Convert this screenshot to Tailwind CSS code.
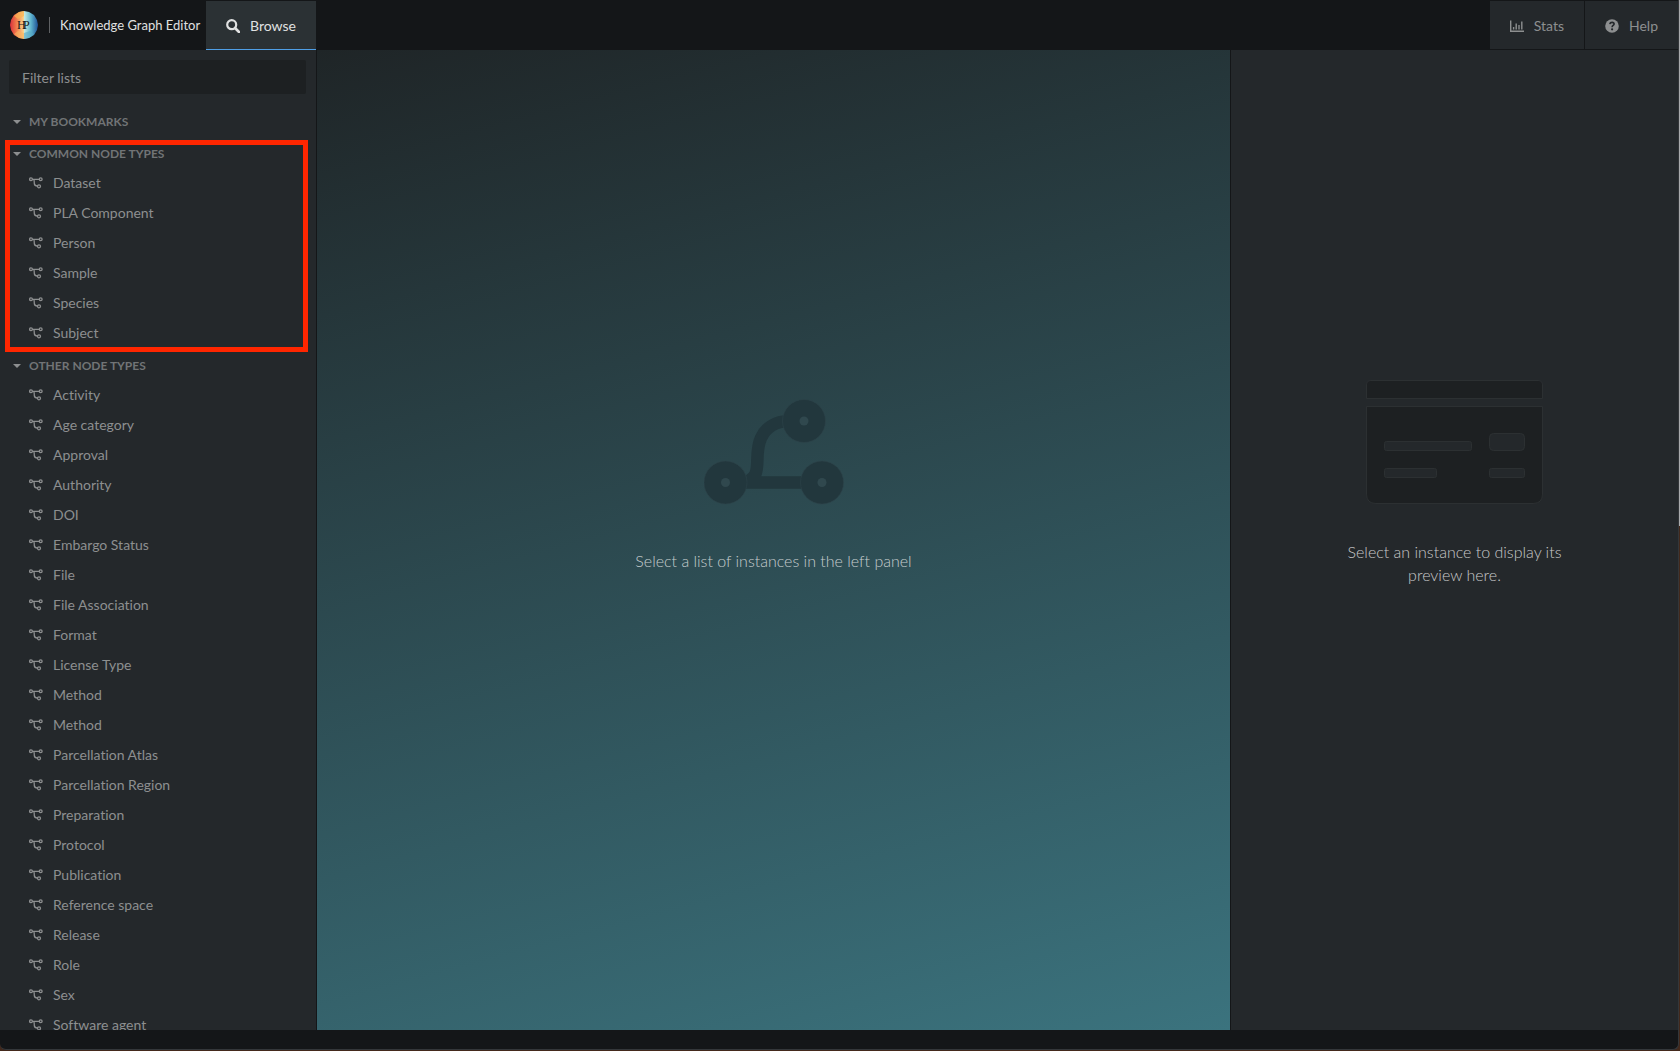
<!DOCTYPE html>
<html lang="en">
<head>
<meta charset="utf-8">
<title>Knowledge Graph Editor</title>
<script src="https://cdn.jsdelivr.net/npm/@tailwindcss/browser@4"></script>
</head>
<body class="bg-[#43291c] font-['Lato',sans-serif] text-sm text-[#8d8f90] [font-variant-ligatures:none]">
<svg class="hidden">
  <symbol id="node" viewBox="0 0 14 12">
    <g fill="none" stroke="currentColor">
      <circle cx="2" cy="2.3" r="1.4" stroke-width="1.3"/>
      <circle cx="11.7" cy="2.3" r="1.4" stroke-width="1.3"/>
      <circle cx="10" cy="9.3" r="1.5" stroke-width="1.3"/>
      <path d="M3.3 2.3H10.5M4.8 2.5C5.4 3.5 5.2 5 5.3 6.4C5.4 8.2 6.4 9 8.6 9.1" stroke-width="1.3"/>
    </g>
  </symbol>
</svg>
<div class="flex h-screen flex-col bg-linear-to-b from-[#a9abad] from-50% to-[#43291c] to-50% pr-px pb-px">
<div class="flex min-h-0 flex-1 flex-col overflow-hidden rounded-b-md border-r border-b border-[#34373a] bg-[#141618]">
  <header class="flex h-[50px] shrink-0">
    <div class="flex w-[206px] shrink-0 items-center pl-[10px]">
      <svg class="size-7" viewBox="0 0 28 28">
        <defs>
          <linearGradient id="warm" x1="0" y1="0" x2="1" y2="0"><stop offset="0" stop-color="#d9303c"/><stop offset=".45" stop-color="#f07a4a"/><stop offset="1" stop-color="#fbd58c"/></linearGradient>
          <linearGradient id="cool" x1="0" y1="0" x2="1" y2="0"><stop offset="0" stop-color="#c5ebe4"/><stop offset=".5" stop-color="#5fb4cd"/><stop offset="1" stop-color="#1c4f94"/></linearGradient>
        </defs>
        <path d="M14 0L9 1L4 4L1 9L0 14L1 19L4 24L9 27L14 28Z" fill="url(#warm)"/>
        <path d="M14 0L19 1L24 4L27 9L28 14L27 19L24 24L19 27L14 28Z" fill="url(#cool)"/>
        <path d="M4 5L9 1L14 0V5L8 8Z" fill="#fbb552" opacity=".7"/>
        <path d="M4 23L9 27L14 28V22L8 20Z" fill="#f9b460" opacity=".6"/>
        <path d="M14 22L20 20L24 23L19 27L14 28Z" fill="#55a9c6" opacity=".6"/>
        <text x="7" y="18" font-family="Liberation Serif" font-size="12" fill="#161a20">H</text>
        <text x="13" y="18" font-family="Liberation Serif" font-size="12" fill="#161a20">P</text>
      </svg>
      <span class="ml-[11px] h-4 w-px bg-[#5f6163]"></span>
      <h1 class="ml-[10px] text-[13px] whitespace-nowrap text-[#e0e1e1]">Knowledge Graph Editor</h1>
    </div>
    <button class="mt-px flex w-[110px] items-center border-b border-[#4f9fe6] bg-[#2b3134] pt-px pl-5 text-[#e0e1e1]">
      <svg class="mr-[10px] size-[14px]" viewBox="0 0 14 14" fill="none" stroke="currentColor"><circle cx="5.7" cy="5.7" r="4.5" stroke-width="2.2"/><path d="M9 9L13 13" stroke-width="2.6" stroke-linecap="round"/></svg>
      Browse
    </button>
    <nav class="ml-auto flex gap-px py-px">
      <button class="flex items-center gap-[10px] bg-[#24282b] px-5 pt-px">
        <svg class="size-[14px]" viewBox="0 0 14 14" fill="none" stroke="currentColor"><path d="M.7 1.5V12.2H14" stroke-width="1.4"/><path d="M3.6 10.5V8M6.2 10.5V4.5M9 10.5V6M11.8 10.5V2.5" stroke-width="1.4"/></svg>
        Stats
      </button>
      <button class="flex items-center gap-[10px] bg-[#24282b] px-5 pt-px">
        <svg class="size-[14px]" viewBox="0 0 14 14"><circle cx="7" cy="7" r="6.8" fill="currentColor"/><path d="M4.800 5.200C5 3.800 6 3.400 7.100 3.400C8.300 3.400 9.100 4.100 9.100 5.100C9.100 6.500 7.100 6.500 7.100 8.200" fill="none" stroke="#24282b" stroke-width="1.6"/><circle cx="7.1" cy="10.3" r="1.1" fill="#24282b"/></svg>
        Help
      </button>
    </nav>
  </header>
  <main class="flex min-h-0 flex-1">
    <aside class="flex w-[317px] shrink-0 flex-col overflow-hidden border-r border-[#141618] bg-[#24282b]">
      <div class="pt-[10px] pr-[10px] pb-[14px] pl-[9px]">
        <input type="text" aria-label="Filter lists" placeholder="Filter lists" class="h-[34px] w-full rounded-xs bg-[#1d2022] px-[13px] placeholder:text-[#8d8f90]">
      </div>
      <div id="lists" class="flex flex-col gap-1"></div>
    </aside>
    <section class="flex flex-1 flex-col items-center bg-linear-[165deg,#1f2527,#3b737e] pt-[349px]">
      <svg class="h-[106px] w-[140px]" viewBox="0 0 140 106">
        <path d="M24 83.500H118M38 83.500C62 80 48 58 57 39C61 30 70 22 86 22" fill="none" stroke="#22373d" stroke-width="12.5"/>
        <g fill="#22373d" stroke="#2d4349" stroke-width=".6"><circle cx="21.5" cy="83.500" r="21.5"/><circle cx="118" cy="83.500" r="21.5"/><circle cx="100" cy="22" r="21.500"/></g>
        <g fill="#30484e"><circle cx="21.5" cy="83.500" r="4.5"/><circle cx="118" cy="83.500" r="4.5"/><circle cx="100" cy="22" r="4.5"/></g>
      </svg>
      <p class="mt-[44px] text-base font-light text-[#c5cccd]">Select a list of instances in the left panel</p>
    </section>
    <aside class="flex w-[448px] shrink-0 flex-col items-center border-l border-[#141618] bg-[#24282b] pt-[330px]">
      <svg class="h-[124px] w-[177px]" viewBox="0 0 177 124" fill="#1d2022" stroke="#2c3032">
        <path d="M.5 18.500V5Q.5 .5 5 .5H172Q176.500 .5 176.500 5V18.500Z"/>
        <path d="M.5 26.500H176.500V114Q176.500 123.500 167 123.500H10Q.5 123.500 .5 114Z"/>
        <g fill="#24282b"><rect x="18.5" y="61.5" width="87" height="9" rx="2"/><rect x="18.5" y="88.5" width="52" height="9" rx="2"/><rect x="123.5" y="53.5" width="35" height="17" rx="4"/><rect x="123.5" y="88.5" width="35" height="9" rx="2"/></g>
      </svg>
      <p class="mt-[36px] w-[240px] text-center text-base leading-[23px] font-light text-[#c8c9ca]">Select an instance to display its preview here.</p>
    </aside>
  </main>
  <footer class="h-[19px] shrink-0"></footer>
</div>
</div>
<script>
const lists = [
  { name: 'My bookmarks', items: [] },
  { name: 'Common node types', marked: true, items: ['Dataset', 'PLA Component', 'Person', 'Sample', 'Species', 'Subject'] },
  { name: 'Other node types', items: ['Activity', 'Age category', 'Approval', 'Authority', 'DOI', 'Embargo Status', 'File', 'File Association', 'Format', 'License Type', 'Method', 'Method', 'Parcellation Atlas', 'Parcellation Region', 'Preparation', 'Protocol', 'Publication', 'Reference space', 'Release', 'Role', 'Sex', 'Software agent'] },
];
document.getElementById('lists').innerHTML = lists.map(l => `
  <section class="relative">
    <button class="flex h-7 w-full items-center pl-[13px] text-xs font-bold uppercase text-[#717476]">
      <svg class="mr-2 h-1 w-2" viewBox="0 0 8 4"><path d="M0 0H8L4 4Z" fill="#8d8f90"/></svg>${l.name}
    </button>
    <ul>${l.items.map(i => `<li><a href="#" class="flex h-[30px] items-center pl-[29px]"><svg class="mr-[10px] h-3 w-[14px]"><use href="#node"/></svg>${i}</a></li>`).join('')}</ul>
    ${l.marked ? '<div class="pointer-events-none absolute top-0 right-2 -bottom-1 left-[5px] border-5 border-[#ff2600]"></div>' : ''}
  </section>`).join('');
</script>
</body>
</html>
